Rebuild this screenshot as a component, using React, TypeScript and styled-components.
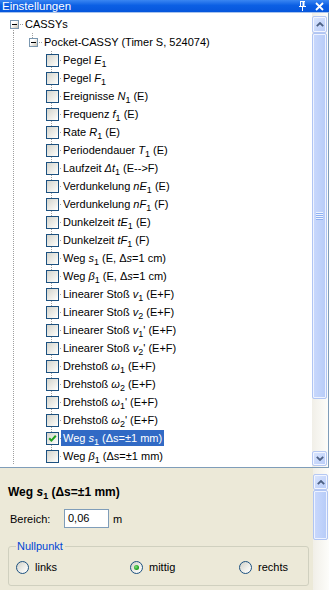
import React from "react";
import styled, { createGlobalStyle } from "styled-components";

const Global = createGlobalStyle`
  html, body { margin: 0; padding: 0; background: #fff; }
  body { font-family: "Liberation Sans", Arial, sans-serif; font-size: 11px; color: #000; }
  * { box-sizing: border-box; }
`;

const Window = styled.div`
  width: 329px;
  height: 590px;
  overflow: hidden;
  display: flex;
  flex-direction: column;
  background: #ece9d8;
`;

const TitleBar = styled.div`
  height: 12px;
  flex: none;
  display: flex;
  align-items: center;
  justify-content: space-between;
  padding: 0 5px 0 2px;
  background: linear-gradient(#3a86f2, #0b5fe4 45%, #0656dc);
  color: #fff;
  font-size: 11.5px;
  line-height: 12px;
`;

const TitleIcons = styled.div`
  display: flex;
  align-items: center;
  gap: 9px;
`;

const TreePanel = styled.div`
  height: 456px;
  flex: none;
  display: flex;
  background: #fff;
  border-top: 1px solid #a9c3ec;
  border-right: 1px solid #7f9db9;
  border-bottom: 1px solid #7f9db9;
`;

const TreeArea = styled.div`
  flex: 1;
  padding: 2px 0 0 4px;
  overflow: hidden;
`;

const Row = styled.div`
  height: 18px;
  display: flex;
  align-items: center;
`;

type Line = "none" | "full" | "top" | "bottom";

const Cell = styled.div<{ $v: Line; $h?: boolean }>`
  position: relative;
  width: 19px;
  height: 18px;
  flex: none;
  display: flex;
  align-items: center;
  justify-content: center;
  &::before {
    content: "";
    display: ${(p) => (p.$v === "none" ? "none" : "block")};
    position: absolute;
    left: 9px;
    width: 1px;
    top: ${(p) => (p.$v === "bottom" ? "9px" : "0")};
    bottom: ${(p) => (p.$v === "top" ? "9px" : "0")};
    background-image: linear-gradient(to bottom, #a0a0a0 50%, transparent 50%);
    background-size: 1px 2px;
  }
  &::after {
    content: "";
    display: ${(p) => (p.$h ? "block" : "none")};
    position: absolute;
    left: 10px;
    right: 0;
    top: 9px;
    height: 1px;
    background-image: linear-gradient(to right, #a0a0a0 50%, transparent 50%);
    background-size: 2px 1px;
  }
`;

const Expander = styled.div`
  position: relative;
  z-index: 1;
  width: 9px;
  height: 9px;
  margin-left: 1px;
  border: 1px solid #7a97b0;
  background: linear-gradient(135deg, #ffffff 35%, #c9c2b3);
  display: flex;
  align-items: center;
  justify-content: center;
  &::after {
    content: "";
    width: 5px;
    height: 1px;
    background: #000;
  }
`;

const Check = styled.div`
  position: relative;
  z-index: 1;
  width: 13px;
  height: 13px;
  margin-left: 1px;
  border: 1px solid #1c5180;
  background: linear-gradient(135deg, #d8d8d1 10%, #f2f2ee 70%, #ffffff);
  display: flex;
  align-items: center;
  justify-content: center;
`;

const Label = styled.span<{ $sel?: boolean; $gap?: number }>`
  display: inline-flex;
  align-items: center;
  height: 16px;
  line-height: 16px;
  padding: 0 2px;
  margin-left: ${(p) => p.$gap ?? 0}px;
  white-space: nowrap;
  background: ${(p) => (p.$sel ? "#316ac5" : "transparent")};
  color: ${(p) => (p.$sel ? "#fff" : "#000")};
`;

const It = styled.i`
  font-style: italic;
`;

const Sub = styled.sub`
  font-size: 9px;
  line-height: 0;
  vertical-align: -3px;
`;

const Pre = styled.span`
  white-space: pre;
`;

const V = ({ n, s, p }: { n: string; s?: string; p?: boolean }) => (
  <>
    <It>{n}</It>
    {s && <Sub>{s}</Sub>}
    {p && "'"}
  </>
);

const VScroll = styled.div<{ $top: number; $bottom?: number }>`
  width: 16px;
  flex: none;
  display: flex;
  flex-direction: column;
  padding: ${(p) => p.$top}px 1px ${(p) => p.$bottom ?? 0}px 0;
  background: linear-gradient(to right, #f1efe8, #fdfdfa);
`;

const ScrollBtn = styled.div<{ $h: number }>`
  height: ${(p) => p.$h}px;
  flex: none;
  border: 1px solid #b5c8f3;
  border-radius: 2px;
  box-shadow: inset 0 0 0 1px #f3f6ff;
  background: linear-gradient(135deg, #dbe6fe, #b7cbf8);
  display: flex;
  align-items: center;
  justify-content: center;
`;

const Thumb = styled.div<{ $h: number }>`
  height: ${(p) => p.$h}px;
  flex: none;
  border: 1px solid #b0c5f3;
  border-radius: 2px;
  box-shadow: inset 0 0 0 1px #eef3ff;
  background: linear-gradient(to right, #c9d8fc, #bed1fa 60%, #b6cbf7);
  display: flex;
  align-items: center;
  justify-content: center;
`;

const Grip = styled.div`
  width: 7px;
  height: 8px;
  background: repeating-linear-gradient(to bottom, #eef4fe 0 1px, #8eb0f2 1px 2px);
`;

const Track = styled.div`
  flex: 1;
`;

const BottomPanel = styled.div`
  flex: 1;
  display: flex;
  min-height: 0;
`;

const Props = styled.div`
  flex: 1;
  padding: 17px 4px 0 8px;
  display: flex;
  flex-direction: column;
`;

const Heading = styled.div`
  font-weight: bold;
  font-size: 12px;
  line-height: 14px;
  height: 14px;
  white-space: nowrap;
`;

const FieldRow = styled.div`
  margin-top: 10px;
  display: flex;
  align-items: center;
  padding-left: 2px;
  height: 19px;
`;

const FieldLabel = styled.span`
  width: 54px;
  flex: none;
`;

const TextBox = styled.div`
  width: 45px;
  height: 19px;
  border: 1px solid #7f9db9;
  background: #fff;
  padding-left: 3px;
  line-height: 17px;
`;

const Unit = styled.span`
  margin-left: 4px;
`;

const Group = styled.fieldset`
  margin: 12px 0 0 0;
  width: 301px;
  padding: 0 0 10px 7px;
  border: 1px solid #d0d0bf;
  border-radius: 3px;
  min-width: 0;
`;

const Legend = styled.legend`
  padding: 0 2px 0 1px;
  color: #0046d5;
  font-size: 11px;
  line-height: 13px;
`;

const Radios = styled.div`
  margin-top: 6px;
  display: grid;
  grid-template-columns: 114px 109px 1fr;
  height: 16px;
  align-items: center;
`;

const RadioItem = styled.label`
  display: flex;
  align-items: center;
  gap: 6px;
`;

const RadioCircle = styled.span<{ $on?: boolean }>`
  width: 13px;
  height: 13px;
  border-radius: 50%;
  border: 1px solid #1c5180;
  background: linear-gradient(135deg, #d6d6ce 10%, #f3f3ef 65%, #fff);
  display: flex;
  align-items: center;
  justify-content: center;
  &::after {
    content: "";
    display: ${(p) => (p.$on ? "block" : "none")};
    width: 5px;
    height: 5px;
    border-radius: 50%;
    background: radial-gradient(circle at 40% 40%, #7ee07e, #21a121 60%, #168516);
  }
`;

const Chevron = ({ up }: { up?: boolean }) => (
  <svg width="8" height="5" viewBox="0 0 8 5">
    <polyline
      points={up ? "0.8,4.2 4,1 7.2,4.2" : "0.8,0.8 4,4 7.2,0.8"}
      fill="none"
      stroke="#4d6185"
      strokeWidth="1.8"
    />
  </svg>
);

type Item = {
  label: React.ReactNode;
  checked?: boolean;
  sel?: boolean;
};

const items: Item[] = [
  { label: <>Pegel <V n="E" s="1" /></> },
  { label: <>Pegel <V n="F" s="1" /></> },
  { label: <>Ereignisse <V n="N" s="1" /> (E)</> },
  { label: <>Frequenz <V n="f" s="1" /> (E)</> },
  { label: <>Rate <V n="R" s="1" /> (E)</> },
  { label: <>Periodendauer <V n="T" s="1" /> (E)</> },
  { label: <>Laufzeit <V n="Δt" s="1" /> (E--&gt;F)</> },
  { label: <>Verdunkelung <V n="nE" s="1" /> (E)</> },
  { label: <>Verdunkelung <V n="nF" s="1" /> (F)</> },
  { label: <>Dunkelzeit <V n="tE" s="1" /> (E)</> },
  { label: <>Dunkelzeit <V n="tF" s="1" /> (F)</> },
  { label: <>Weg <V n="s" s="1" /> (E, Δ<It>s</It>=1 cm)</> },
  { label: <>Weg <V n="β" s="1" /> (E, Δ<It>s</It>=1 cm)</> },
  { label: <>Linearer Stoß <V n="v" s="1" /> (E+F)</> },
  { label: <>Linearer Stoß <V n="v" s="2" /> (E+F)</> },
  { label: <>Linearer Stoß <V n="v" s="1" p /> (E+F)</> },
  { label: <>Linearer Stoß <V n="v" s="2" p /> (E+F)</> },
  { label: <>Drehstoß <V n="ω" s="1" /> (E+F)</> },
  { label: <>Drehstoß <V n="ω" s="2" /> (E+F)</> },
  { label: <>Drehstoß <V n="ω" s="1" p /> (E+F)</> },
  { label: <>Drehstoß <V n="ω" s="2" p /> (E+F)</> },
  { label: <>Weg <V n="s" s="1" /> (Δs=±1 mm)</>, checked: true, sel: true },
  { label: <>Weg <V n="β" s="1" /> (Δs=±1 mm)</> },
];

export default function App() {
  return (
    <>
      <Global />
      <Window>
        <TitleBar>
          <span>Einstellungen</span>
          <TitleIcons>
            <svg width="7" height="10" viewBox="0 0 7 10">
              <path d="M1 0.5h5M1.5 0.5v5M4.5 0.5v5M0 5.5h7M3.5 5.5v4.5" stroke="#fff" strokeWidth="1" fill="none" />
              <path d="M4.5 0.5v5" stroke="#fff" strokeWidth="2" />
            </svg>
            <svg width="9" height="9" viewBox="0 0 9 9">
              <path d="M1 1L8 8M8 1L1 8" stroke="#fff" strokeWidth="1.8" />
            </svg>
          </TitleIcons>
        </TitleBar>
        <TreePanel>
          <TreeArea>
            <Row>
              <Cell $v="bottom" $h>
                <Expander />
              </Cell>
              <Label $gap={0}>CASSYs</Label>
            </Row>
            <Row>
              <Cell $v="full" />
              <Cell $v="top" $h>
                <Expander />
              </Cell>
              <Label $gap={0}>Pocket-CASSY (Timer S, 524074)</Label>
            </Row>
            {items.map((it, i) => (
              <Row key={i}>
                <Cell $v="full" />
                <Cell $v="none" />
                <Cell $v={i === items.length - 1 ? "top" : "full"} $h>
                  <Check>
                    {it.checked && (
                      <svg width="9" height="9" viewBox="0 0 9 9">
                        <polyline points="1.2,4.2 3.4,6.6 7.8,1.8" fill="none" stroke="#21a121" strokeWidth="2" />
                      </svg>
                    )}
                  </Check>
                </Cell>
                <Label $sel={it.sel}>
                  <Pre>{it.label}</Pre>
                </Label>
              </Row>
            ))}
          </TreeArea>
          <VScroll $top={3} $bottom={1}>
            <ScrollBtn $h={17}>
              <Chevron up />
            </ScrollBtn>
            <Thumb $h={366}>
              <Grip />
            </Thumb>
            <Track />
            <ScrollBtn $h={15}>
              <Chevron />
            </ScrollBtn>
          </VScroll>
        </TreePanel>
        <BottomPanel>
          <Props>
            <Heading>
              Weg <V n="s" s="1" /> (Δs=±1 mm)
            </Heading>
            <FieldRow>
              <FieldLabel>Bereich:</FieldLabel>
              <TextBox>0,06</TextBox>
              <Unit>m</Unit>
            </FieldRow>
            <Group>
              <Legend>Nullpunkt</Legend>
              <Radios>
                <RadioItem>
                  <RadioCircle />
                  links
                </RadioItem>
                <RadioItem>
                  <RadioCircle $on />
                  mittig
                </RadioItem>
                <RadioItem>
                  <RadioCircle />
                  rechts
                </RadioItem>
              </Radios>
            </Group>
          </Props>
          <VScroll $top={6}>
            <ScrollBtn $h={16}>
              <Chevron up />
            </ScrollBtn>
            <Thumb $h={50} />
            <Track />
          </VScroll>
        </BottomPanel>
      </Window>
    </>
  );
}
